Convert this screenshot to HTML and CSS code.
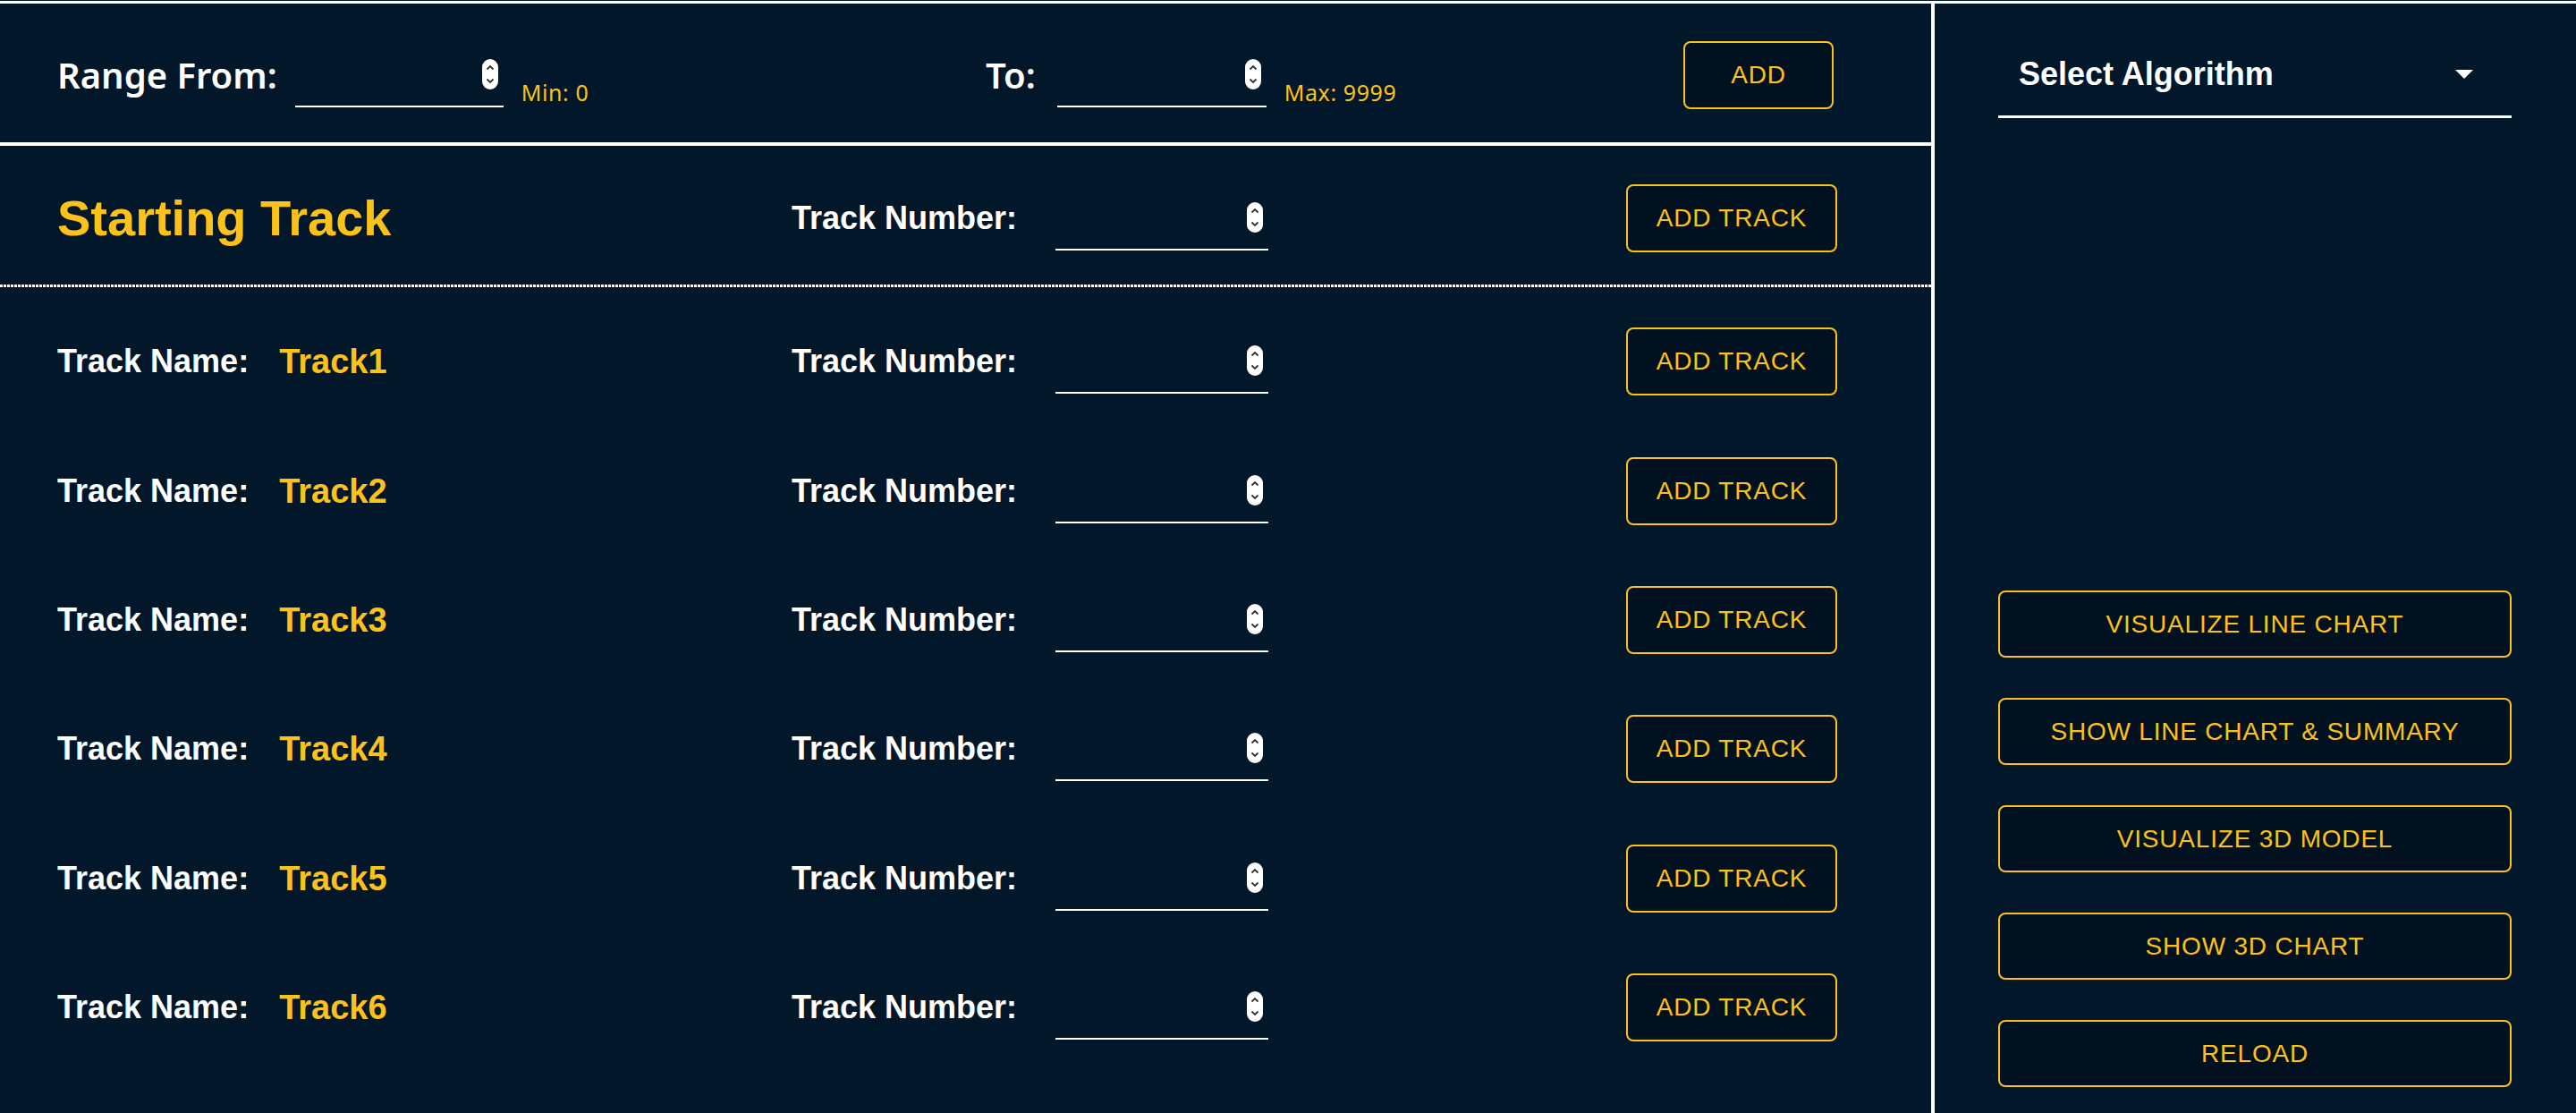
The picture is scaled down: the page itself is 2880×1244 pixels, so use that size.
FILE: index.html
```html
<!DOCTYPE html>
<html lang="en">
<head>
<meta charset="utf-8">
<title>Tracks</title>
<link rel="stylesheet" href="styles.css">
</head>
<body>
<div class="app">
  <main class="left">
    <div class="range-bar">
      <div class="range-group group-from">
        <span class="range-label">Range From:</span>
        <div class="num-input range-from-input">
          <svg class="spinner" viewBox="0 0 18 34" width="18" height="34"><rect width="18" height="34" rx="9" fill="#fff"/><path d="M5.5 11.5 L9 8 L12.5 11.5" stroke="#333" stroke-width="1.8" fill="none"/><path d="M5.5 22.5 L9 26 L12.5 22.5" stroke="#333" stroke-width="1.8" fill="none"/></svg>
        </div>
        <span class="hint">Min: 0</span>
      </div>
      <div class="range-group group-to">
        <span class="range-label">To:</span>
        <div class="num-input range-to-input">
          <svg class="spinner" viewBox="0 0 18 34" width="18" height="34"><rect width="18" height="34" rx="9" fill="#fff"/><path d="M5.5 11.5 L9 8 L12.5 11.5" stroke="#333" stroke-width="1.8" fill="none"/><path d="M5.5 22.5 L9 26 L12.5 22.5" stroke="#333" stroke-width="1.8" fill="none"/></svg>
        </div>
        <span class="hint">Max: 9999</span>
      </div>
      <button class="btn btn-add">ADD</button>
    </div>

    <div class="track-row start-row">
      <div class="name-cell"><span class="start-title">Starting Track</span></div>
      <span class="num-label">Track Number:</span>
      <div class="num-input">
        <svg class="spinner" viewBox="0 0 18 34" width="18" height="34"><rect width="18" height="34" rx="9" fill="#fff"/><path d="M5.5 11.5 L9 8 L12.5 11.5" stroke="#333" stroke-width="1.8" fill="none"/><path d="M5.5 22.5 L9 26 L12.5 22.5" stroke="#333" stroke-width="1.8" fill="none"/></svg>
      </div>
      <span></span>
      <button class="btn btn-track">ADD TRACK</button>
    </div>
    <div class="dotted"></div>

    <div class="track-list">
      <div class="track-row">
        <div class="name-cell"><span class="name-label">Track Name:</span><span class="name-value">Track1</span></div>
        <span class="num-label">Track Number:</span>
        <div class="num-input"><svg class="spinner" viewBox="0 0 18 34" width="18" height="34"><rect width="18" height="34" rx="9" fill="#fff"/><path d="M5.5 11.5 L9 8 L12.5 11.5" stroke="#333" stroke-width="1.8" fill="none"/><path d="M5.5 22.5 L9 26 L12.5 22.5" stroke="#333" stroke-width="1.8" fill="none"/></svg></div>
        <span></span>
        <button class="btn btn-track">ADD TRACK</button>
      </div>
      <div class="track-row">
        <div class="name-cell"><span class="name-label">Track Name:</span><span class="name-value">Track2</span></div>
        <span class="num-label">Track Number:</span>
        <div class="num-input"><svg class="spinner" viewBox="0 0 18 34" width="18" height="34"><rect width="18" height="34" rx="9" fill="#fff"/><path d="M5.5 11.5 L9 8 L12.5 11.5" stroke="#333" stroke-width="1.8" fill="none"/><path d="M5.5 22.5 L9 26 L12.5 22.5" stroke="#333" stroke-width="1.8" fill="none"/></svg></div>
        <span></span>
        <button class="btn btn-track">ADD TRACK</button>
      </div>
      <div class="track-row">
        <div class="name-cell"><span class="name-label">Track Name:</span><span class="name-value">Track3</span></div>
        <span class="num-label">Track Number:</span>
        <div class="num-input"><svg class="spinner" viewBox="0 0 18 34" width="18" height="34"><rect width="18" height="34" rx="9" fill="#fff"/><path d="M5.5 11.5 L9 8 L12.5 11.5" stroke="#333" stroke-width="1.8" fill="none"/><path d="M5.5 22.5 L9 26 L12.5 22.5" stroke="#333" stroke-width="1.8" fill="none"/></svg></div>
        <span></span>
        <button class="btn btn-track">ADD TRACK</button>
      </div>
      <div class="track-row">
        <div class="name-cell"><span class="name-label">Track Name:</span><span class="name-value">Track4</span></div>
        <span class="num-label">Track Number:</span>
        <div class="num-input"><svg class="spinner" viewBox="0 0 18 34" width="18" height="34"><rect width="18" height="34" rx="9" fill="#fff"/><path d="M5.5 11.5 L9 8 L12.5 11.5" stroke="#333" stroke-width="1.8" fill="none"/><path d="M5.5 22.5 L9 26 L12.5 22.5" stroke="#333" stroke-width="1.8" fill="none"/></svg></div>
        <span></span>
        <button class="btn btn-track">ADD TRACK</button>
      </div>
      <div class="track-row">
        <div class="name-cell"><span class="name-label">Track Name:</span><span class="name-value">Track5</span></div>
        <span class="num-label">Track Number:</span>
        <div class="num-input"><svg class="spinner" viewBox="0 0 18 34" width="18" height="34"><rect width="18" height="34" rx="9" fill="#fff"/><path d="M5.5 11.5 L9 8 L12.5 11.5" stroke="#333" stroke-width="1.8" fill="none"/><path d="M5.5 22.5 L9 26 L12.5 22.5" stroke="#333" stroke-width="1.8" fill="none"/></svg></div>
        <span></span>
        <button class="btn btn-track">ADD TRACK</button>
      </div>
      <div class="track-row">
        <div class="name-cell"><span class="name-label">Track Name:</span><span class="name-value">Track6</span></div>
        <span class="num-label">Track Number:</span>
        <div class="num-input"><svg class="spinner" viewBox="0 0 18 34" width="18" height="34"><rect width="18" height="34" rx="9" fill="#fff"/><path d="M5.5 11.5 L9 8 L12.5 11.5" stroke="#333" stroke-width="1.8" fill="none"/><path d="M5.5 22.5 L9 26 L12.5 22.5" stroke="#333" stroke-width="1.8" fill="none"/></svg></div>
        <span></span>
        <button class="btn btn-track">ADD TRACK</button>
      </div>
    </div>
  </main>

  <aside class="right">
    <div class="select">
      <span class="select-text">Select Algorithm</span>
      <span class="select-caret"></span>
    </div>
    <div class="actions">
      <button class="btn btn-action">VISUALIZE LINE CHART</button>
      <button class="btn btn-action">SHOW LINE CHART &amp; SUMMARY</button>
      <button class="btn btn-action">VISUALIZE 3D MODEL</button>
      <button class="btn btn-action">SHOW 3D CHART</button>
      <button class="btn btn-action">RELOAD</button>
    </div>
  </aside>
</div>
</body>
</html>
```

FILE: styles.css
```css
* { box-sizing: border-box; }

html, body {
  margin: 0;
  padding: 0;
  background: #03172b;
}

body {
  padding-top: 1px;
  height: 1244px;
  overflow: hidden;
  font-family: "Liberation Sans", Arial, sans-serif;
  color: #ffffff;
}

.app {
  display: flex;
  border-top: 3px solid #ffffff;
  height: 1243px;
}

.left {
  width: 2163px;
  flex: none;
  border-right: 4px solid #ffffff;
  display: flex;
  flex-direction: column;
}

/* ---------- range bar ---------- */
.range-bar {
  height: 159px;
  flex: none;
  padding: 4px 0 0 64px;
  display: flex;
  align-items: center;
  border-bottom: 4px solid #ffffff;
}

.range-group {
  display: flex;
  align-items: center;
  flex: none;
}

.group-from { width: 1038px; }
.group-to { width: 780px; }

.range-label {
  font-family: "Noto Sans", "Open Sans", sans-serif;
  font-weight: 600;
  font-size: 40px;
  line-height: 48px;
  color: #ffffff;
}

.range-from-input { width: 233px; margin-left: 20px; }
.range-to-input { width: 234px; margin-left: 24px; }

.hint {
  font-family: "Noto Sans", "Open Sans", sans-serif;
  font-size: 25px;
  letter-spacing: 0.6px;
  line-height: 26px;
  color: #fbc21c;
  margin-left: 20px;
  margin-top: 38px;
}

/* ---------- number input ---------- */
.num-input {
  height: 72px;
  border-bottom: 2px solid #ffffff;
  display: flex;
  align-items: center;
  justify-content: flex-end;
  padding-right: 6px;
}

.spinner {
  display: block;
  flex: none;
}

/* ---------- buttons ---------- */
.btn {
  font-family: "Liberation Sans", Arial, sans-serif;
  font-size: 28px;
  letter-spacing: 0.8px;
  color: #fbc21c;
  background: #02111f;
  border: 2px solid #fbc21c;
  border-radius: 8px;
  padding: 0;
  display: flex;
  align-items: center;
  justify-content: center;
  cursor: pointer;
}

.btn-add {
  width: 168px;
  height: 76px;
  flex: none;
}

.btn-track {
  width: 236px;
  height: 76px;
}

/* ---------- track rows ---------- */
.track-row {
  display: grid;
  grid-template-columns: 821px 295px 238px 400px 236px;
  align-items: center;
  padding-left: 64px;
  height: 144.4px;
}

.start-row {
  height: 155px;
  padding-top: 7px;
  flex: none;
}

.dotted {
  height: 3px;
  flex: none;
  background: repeating-linear-gradient(to right, #ffffff 0 3px, transparent 3px 4px);
}

.track-list {
  padding-top: 11px;
  display: flex;
  flex-direction: column;
}

.name-cell {
  display: flex;
  align-items: center;
}

.start-title {
  font-weight: 700;
  font-size: 56px;
  line-height: 64px;
  color: #fbc21c;
}

.name-label {
  font-weight: 700;
  font-size: 36px;
  line-height: 44px;
  color: #ffffff;
}

.name-value {
  font-weight: 700;
  font-size: 38px;
  line-height: 44px;
  color: #fbc21c;
  margin-left: 34px;
}

.num-label {
  font-weight: 700;
  font-size: 36px;
  line-height: 44px;
  color: #ffffff;
}

/* ---------- right panel ---------- */
.right {
  flex: 1;
  display: flex;
  flex-direction: column;
  padding: 0 0 29px 71px;
}

.select {
  width: 574px;
  height: 87px;
  margin-top: 41px;
  border-bottom: 3px solid #ffffff;
  display: flex;
  align-items: center;
  justify-content: space-between;
  padding: 0 43px 8px 23px;
}

.select-text {
  font-weight: 700;
  font-size: 36px;
  line-height: 40px;
  color: #ffffff;
}

.select-caret {
  width: 0;
  height: 0;
  border-left: 10px solid transparent;
  border-right: 10px solid transparent;
  border-top: 10px solid #ffffff;
}

.actions {
  margin-top: auto;
  display: flex;
  flex-direction: column;
  gap: 45px;
}

.btn-action {
  width: 574px;
  height: 75px;
}
```
